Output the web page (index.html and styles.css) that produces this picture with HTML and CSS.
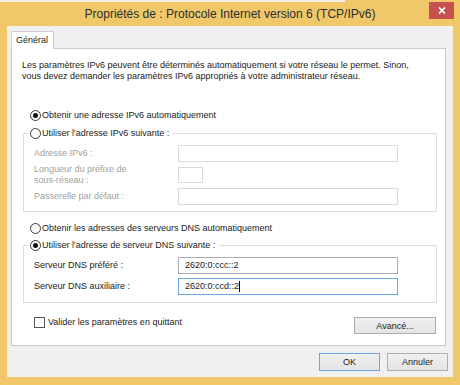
FILE: index.html
```html
<!DOCTYPE html>
<html lang="fr">
<head>
<meta charset="utf-8">
<title>Propriétés de : Protocole Internet version 6 (TCP/IPv6)</title>
<link rel="stylesheet" href="styles.css">
</head>
<body>
<div class="window">
  <div class="strip"></div>
  <div class="titlebar">
    <h1 class="title">Propriétés de : Protocole Internet version 6 (TCP/IPv6)</h1>
    <button class="close" aria-label="Fermer"><svg width="8" height="7" viewBox="0 0 8 7"><path d="M1 0.5L7 6.5M7 0.5L1 6.5" stroke="#fff" stroke-width="1.7"/></svg></button>
  </div>
  <div class="client">
    <div class="tabs"><div class="tab">Général</div></div>
    <div class="panel">
      <p class="intro">Les paramètres IPv6 peuvent être déterminés automatiquement si votre réseau le permet. Sinon,<br>vous devez demander les paramètres IPv6 appropriés à votre administrateur réseau.</p>

      <div class="option first"><span class="radio checked"></span><span>Obtenir une adresse IPv6 automatiquement</span></div>

      <fieldset class="group g1">
        <legend class="option"><span class="radio"></span><span>Utiliser l'adresse IPv6 suivante :</span></legend>
        <div class="rows rows-ip disabled">
          <span class="lbl">Adresse IPv6 :</span><span class="field wide"></span>
          <span class="lbl">Longueur du préfixe de<br>sous-réseau :</span><span class="field small"></span>
          <span class="lbl">Passerelle par défaut :</span><span class="field wide"></span>
        </div>
      </fieldset>

      <div class="option second"><span class="radio"></span><span>Obtenir les adresses des serveurs DNS automatiquement</span></div>

      <fieldset class="group g2">
        <legend class="option"><span class="radio checked"></span><span>Utiliser l'adresse de serveur DNS suivante :</span></legend>
        <div class="rows rows-dns">
          <span class="lbl">Serveur DNS préféré :</span><span class="field wide">2620:0:ccc::2</span>
          <span class="lbl">Serveur DNS auxiliaire :</span><span class="field wide focus">2620:0:ccd::2<span class="caret"></span></span>
        </div>
      </fieldset>

      <div class="footer">
        <div class="option check-row"><span class="checkbox"></span><span>Valider les paramètres en quittant</span></div>
        <button class="btn advanced">Avancé...</button>
      </div>
    </div>
    <div class="actions">
      <button class="btn default">OK</button>
      <button class="btn">Annuler</button>
    </div>
  </div>
</div>
</body>
</html>
```
FILE: styles.css
```css
* { box-sizing: border-box; }

html, body {
  margin: 0;
  padding: 0;
}

body {
  width: 460px;
  height: 385px;
  overflow: hidden;
  background: #f0c86a;
  font-family: "Liberation Sans", Arial, sans-serif;
  font-size: 9px;
  color: #1a1a1a;
}

.window {
  width: 460px;
  height: 385px;
  display: flex;
  flex-direction: column;
}

.strip {
  height: 2px;
  width: 345px;
  background: #f3efe4;
}

.titlebar {
  height: 24px;
  display: grid;
  grid-template-columns: 1fr auto 1fr;
  align-items: start;
}

.title {
  grid-column: 2;
  margin: 0;
  font-size: 12px;
  font-weight: normal;
  line-height: 24px;
  color: #2d2d2d;
  white-space: nowrap;
}

.close {
  grid-column: 3;
  justify-self: end;
  margin-right: 6px;
  width: 25px;
  height: 17px;
  padding: 0;
  border: 0;
  background: #c75050;
  display: flex;
  align-items: center;
  justify-content: center;
}

.client {
  margin: 0 7px;
  height: 351px;
  background: #f0f0f0;
  padding: 5px 5px 0 4px;
  display: flex;
  flex-direction: column;
}

.tabs {
  display: flex;
}

.tab {
  position: relative;
  z-index: 1;
  height: 18px;
  margin-bottom: -1px;
  padding: 0 5px 0 4px;
  border: 1px solid #d0d0d0;
  border-bottom: 0;
  background: #fff;
  line-height: 17px;
}

.panel {
  margin-right: 2px;
  background: #fff;
  border: 1px solid #cbcbcb;
  padding: 11px 8px 11px 10px;
}

.intro {
  margin: 0;
  line-height: 11px;
  white-space: nowrap;
}

.option {
  display: flex;
  align-items: center;
  gap: 1px;
  line-height: 11px;
  white-space: nowrap;
}

.option.first {
  margin: 28px 0 0 8px;
}

.option.second {
  margin: 11px 0 0 8px;
}

.radio {
  width: 11px;
  height: 11px;
  border: 1px solid #3a3a3a;
  border-radius: 50%;
  background: #fbfbfb;
  display: inline-flex;
  align-items: center;
  justify-content: center;
  flex: none;
}

.radio.checked::after {
  content: "";
  width: 5px;
  height: 5px;
  border-radius: 50%;
  background: #111;
}

.group {
  margin: 7px 0 0 1px;
  padding: 6px 8px 6px 5px;
  border: 1px solid #dcdcdc;
  min-width: 0;
}

.group.g2 {
  margin-top: 6px;
  padding-bottom: 7px;
}

.group legend {
  padding: 0 4px 0 1px;
}

.rows {
  margin-left: 5px;
  display: grid;
  grid-template-columns: 144px auto;
  align-items: center;
  justify-items: start;
}

.rows-ip {
  grid-template-rows: 17px 22px 17px;
  row-gap: 2px;
}

.rows-dns {
  grid-template-rows: 17px 17px;
  row-gap: 4px;
}

.lbl {
  line-height: 11px;
  white-space: nowrap;
}

.disabled .lbl {
  color: #a0a0a0;
}

.field {
  height: 17px;
  border: 1px solid #a9abb1;
  background: #fff;
  padding-left: 6px;
  line-height: 15px;
  display: flex;
  align-items: center;
}

.field.wide {
  width: 220px;
}

.field.small {
  width: 25px;
  height: 16px;
}

.disabled .field {
  border-color: #dadada;
}

.field.focus {
  border-color: #69a7e8;
}

.caret {
  width: 1px;
  height: 11px;
  background: #000;
}

.footer {
  margin: 14px 1px 0 12px;
  display: flex;
  justify-content: space-between;
  align-items: flex-start;
}

.checkbox {
  width: 11px;
  height: 11px;
  border: 1px solid #555;
  background: #fff;
  flex: none;
  margin-right: 2px;
}

.btn {
  width: 61px;
  height: 18px;
  padding: 0;
  border: 1px solid #adadad;
  background: linear-gradient(#f1f1f1, #e4e4e4);
  font-family: inherit;
  font-size: 9px;
  color: #1a1a1a;
}

.btn.advanced {
  width: 82px;
  height: 17px;
}

.btn.default {
  border-color: #6aa6e6;
}

.actions {
  margin-top: 7px;
  display: flex;
  justify-content: flex-end;
  gap: 7px;
}
```
